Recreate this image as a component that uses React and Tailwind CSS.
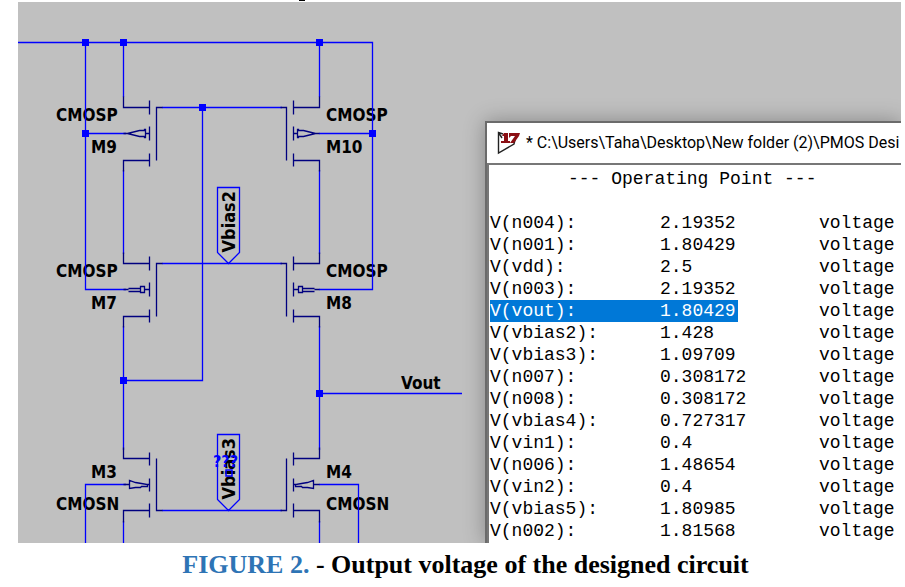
const WIRE = "#0000ff";
const PART = "#00007f";

const rows = [
  ["V(n004):", "2.19352"],
  ["V(n001):", "1.80429"],
  ["V(vdd):", "2.5"],
  ["V(n003):", "2.19352"],
  ["V(vout):", "1.80429"],
  ["V(vbias2):", "1.428"],
  ["V(vbias3):", "1.09709"],
  ["V(n007):", "0.308172"],
  ["V(n008):", "0.308172"],
  ["V(vbias4):", "0.727317"],
  ["V(vin1):", "0.4"],
  ["V(n006):", "1.48654"],
  ["V(vin2):", "0.4"],
  ["V(vbias5):", "1.80985"],
  ["V(n002):", "1.81568"],
];
const SELECTED = "V(vout):";

const nodes = [
  [67, 40], [105, 40], [301, 40], [184, 105], [67, 131], [354, 131], [105, 378], [301, 391],
];

const labels = [
  [38, 119, "CMOSP"], [73, 151, "M9"], [308, 119, "CMOSP"], [308, 151, "M10"],
  [38, 275, "CMOSP"], [73, 307, "M7"], [308, 275, "CMOSP"], [308, 307, "M8"],
  [73, 476, "M3"], [38, 508, "CMOSN"], [308, 476, "M4"], [308, 508, "CMOSN"],
  [383, 387, "Vout"],
];

const arrows = {
  wide: "M0 26H4L16 23H21V22H22V30H21V29H16L4 26M22 26H26",
  slim: "M0 26H5M5 25H17M5 28H17M17 23H21V29H17ZM21 26H26",
  nmos: "M0 26H6M6 22V30L12 29H17L18 28H24V26L18 25 12 24ZM24 26H26",
};

function Transistor({ x, y, flip, kind }) {
  const body =
    kind === "nmos"
      ? "M0 -11V0H26M0 64V52H26M26 -6V7M26 20V33M26 45V59M33 0V52H39"
      : "M0 -11V0H26M0 64V53H26M26 -7V7M26 19V33M26 46V59M39 0H33V53";
  return (
    <g
      transform={`translate(${x} ${y})${flip ? " scale(-1 1)" : ""}`}
      fill="none"
      stroke={PART}
      strokeWidth="1.3"
    >
      <path d={body} />
      <path d={arrows[kind]} />
    </g>
  );
}

function Port({ y, name }) {
  return (
    <g>
      <path d={`M199.5 ${y}h22v65l-11 11l-11 -11z`} fill="none" stroke={WIRE} strokeWidth="1.3" />
      <text fontSize="18" transform={`translate(217 ${y + 65}) rotate(-90)`}>{name}</text>
    </g>
  );
}

function Schematic() {
  return (
    <svg width="466" height="541" className="block shrink-0" role="img" aria-label="Circuit schematic">
      <g fontFamily="'DejaVu Sans Condensed', 'DejaVu Sans', sans-serif" fontWeight="700" fontSize="17" fill="#000">
        {labels.map(([x, y, t]) => (
          <text key={`${x}-${y}`} x={x} y={y}>{t}</text>
        ))}
        <Port y={185.5} name="Vbias2" />
        <Port y={432.5} name="Vbias3" />
        <text x="195" y="465" fill={WIRE} fontSize="16">???</text>
        <path d="M208 468h6v6h-6z" fill="none" stroke={WIRE} strokeWidth="1.5" />
      </g>
      <path
        d="M0 40.5H354.5V287.5H319M67.5 40V287.5H88M67 131.5H108M319 131.5H354M105.5 40V95M301.5 40V95M144 105.5H264M184.5 105V378.5H105M105.5 168V252M301.5 168V252M144 261.5H264M105.5 324V448M301.5 324V448M301 391.5H444M67.5 541V482.5H108M340.5 541V482.5H301M144 508.5H264M105.5 519V541M301.5 519V541M88 287.5H108M301 287.5H320M301 131.5H320"
        fill="none"
        stroke={WIRE}
        strokeWidth="1.3"
      />
      <Transistor x={105.5} y={105.5} kind="wide" />
      <Transistor x={301.5} y={105.5} kind="wide" flip />
      <Transistor x={105.5} y={261.5} kind="slim" />
      <Transistor x={301.5} y={261.5} kind="slim" flip />
      <Transistor x={105.5} y={456.5} kind="nmos" />
      <Transistor x={301.5} y={456.5} kind="nmos" flip />
      {nodes.map(([x, y]) => (
        <rect key={`${x}-${y}`} x={x - 3} y={y - 3} width="7" height="7" fill={WIRE} />
      ))}
    </svg>
  );
}

function AppLogo() {
  return (
    <svg width="23" height="24" viewBox="0 0 23 24" className="shrink-0" aria-hidden="true">
      <path d="M6 3 1.500 1.500V22L17 13 19 5M1.500 1.500 5 7" fill="none" stroke="#222" strokeWidth="1.4" />
      <path d="M7 2h4v8h2v2H4v-2h3V5H5zM12 2h11l-1 3-5 7h-4l5-7h-4l-2 2z" fill="#8b0f14" />
    </svg>
  );
}

function ResultsWindow() {
  return (
    <section className="absolute top-[119px] right-0 bottom-0 left-[467px] overflow-hidden border-t-2 border-l-2 border-[#6b6b6b] bg-white shadow-[0_0_20px_rgba(0,0,0,0.3)]">
      <header className="flex h-10 items-center gap-1.5 pl-2.5 font-[Roboto,sans-serif] text-base whitespace-nowrap text-black">
        <AppLogo />
        <h2>* C:\Users\Taha\Desktop\New folder (2)\PMOS Desi</h2>
      </header>
      <div className="h-full border-t-2 border-l-2 border-[#777] pt-[3px] pl-px font-['Liberation_Mono',monospace] text-lg leading-[22px] text-black">
        <p className="pl-[78px] whitespace-pre">--- Operating Point ---</p>
        <table className="mt-[22px] w-[410px] table-fixed text-left">
          <tbody>
            {rows.map(([name, value]) => {
              const selected = name === SELECTED;
              return (
                <tr key={name}>
                  <th
                    scope="row"
                    className={selected ? "w-[170px] bg-[#0078d7] p-0 font-normal text-white" : "w-[170px] p-0 font-normal"}
                  >
                    {name}
                  </th>
                  <td className="w-[159px] p-0">
                    <span className={selected ? "block w-[78px] bg-[#0078d7] text-white" : "block"}>{value}</span>
                  </td>
                  <td className="p-0">voltage</td>
                </tr>
              );
            })}
          </tbody>
        </table>
      </div>
    </section>
  );
}

export default function App() {
  return (
    <figure className="overflow-hidden bg-white pl-[18px]">
      <div className="flex h-0.5 pl-[281px]">
        <span className="h-px w-1.5 bg-black" />
      </div>
      <div className="relative mr-1 overflow-hidden bg-[#c0c0c0]">
        <Schematic />
        <ResultsWindow />
      </div>
      <figcaption className="pt-1.5 pl-2 text-center font-['Liberation_Serif',serif] text-[26px] leading-8 font-bold text-black">
        <span className="text-[#2e74b5]">FIGURE 2.</span> - Output voltage of the designed circuit
      </figcaption>
    </figure>
  );
}
